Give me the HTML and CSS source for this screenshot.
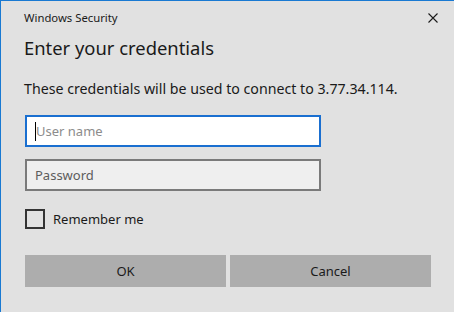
FILE: index.html
```html
<!DOCTYPE html>
<html>
<head>
<meta charset="utf-8">
<link rel="stylesheet" href="styles.css">
</head>
<body>
<div class="window">
  <div class="titlebar">
    <span class="title">Windows Security</span>
    <span class="close" aria-label="Close">
      <svg width="10" height="10" viewBox="0 0 10 10"><path d="M0.5 0.5 L9.5 9.5 M9.5 0.5 L0.5 9.5" stroke="#1a1a1a" stroke-width="1.1" fill="none"/></svg>
    </span>
  </div>
  <div class="content">
    <h1 class="heading">Enter your credentials</h1>
    <p class="desc">These credentials will be used to connect to 3.77.34.114.</p>
    <div class="field focused"><span class="caret"></span><span class="ph light">User name</span></div>
    <div class="field pwd"><span class="ph">Password</span></div>
    <label class="remember"><span class="box"></span><span class="rtext">Remember me</span></label>
    <div class="buttons">
      <div class="btn">OK</div>
      <div class="btn">Cancel</div>
    </div>
  </div>
</div>
</body>
</html>
```
FILE: styles.css
```css
html, body {
  margin: 0;
  padding: 0;
}
body {
  width: 454px;
  height: 312px;
  overflow: hidden;
  background: #e1e1e1;
  font-family: "Noto Sans", "Open Sans", sans-serif;
  color: #1a1a1a;
}
.window {
  box-sizing: border-box;
  width: 454px;
  height: 312px;
  border-top: 1px solid #1979d2;
  border-left: 1px solid #1979d2;
  background: #e1e1e1;
}
.titlebar {
  height: 33px;
  display: flex;
  align-items: center;
  justify-content: space-between;
  padding-left: 23px;
  padding-right: 16px;
}
.title {
  font-size: 11.3px;
  color: #1a1a1a;
}
.close {
  display: flex;
  width: 10px;
  height: 10px;
}
.content {
  padding-left: 24px;
  display: flex;
  flex-direction: column;
}
.heading {
  margin: 0;
  font-weight: normal;
  font-size: 18.4px;
  line-height: 28px;
  margin-left: -1px;
  color: #1a1a1a;
}
.desc {
  margin: 0;
  margin-top: 17px;
  font-size: 14.2px;
  line-height: 20px;
  margin-left: -1px;
}
.field {
  box-sizing: border-box;
  width: 296px;
  height: 32px;
  border: 2px solid #7a7a7a;
  background: #efefef;
  display: flex;
  align-items: center;
  padding-left: 8px;
  font-size: 13px;
}
.field.focused {
  margin-top: 16px;
  border-color: #1a6fd0;
  background: #ffffff;
}
.field.pwd {
  margin-top: 12px;
}
.caret {
  width: 1px;
  height: 19px;
  background: #000;
  margin-right: 0;
}
.ph {
  color: #5c5c5c;
}
.ph.light {
  color: #8c8c8c;
}
.remember {
  margin-top: 18px;
  display: flex;
  align-items: center;
  font-size: 13px;
}
.box {
  box-sizing: border-box;
  width: 20px;
  height: 20px;
  border: 2px solid #333333;
  margin-right: 8px;
}
.buttons {
  margin-top: 26px;
  display: flex;
  gap: 4px;
}
.btn {
  width: 201px;
  height: 32px;
  background: #adadad;
  display: flex;
  align-items: center;
  justify-content: center;
  font-size: 13px;
  color: #1a1a1a;
}
```
